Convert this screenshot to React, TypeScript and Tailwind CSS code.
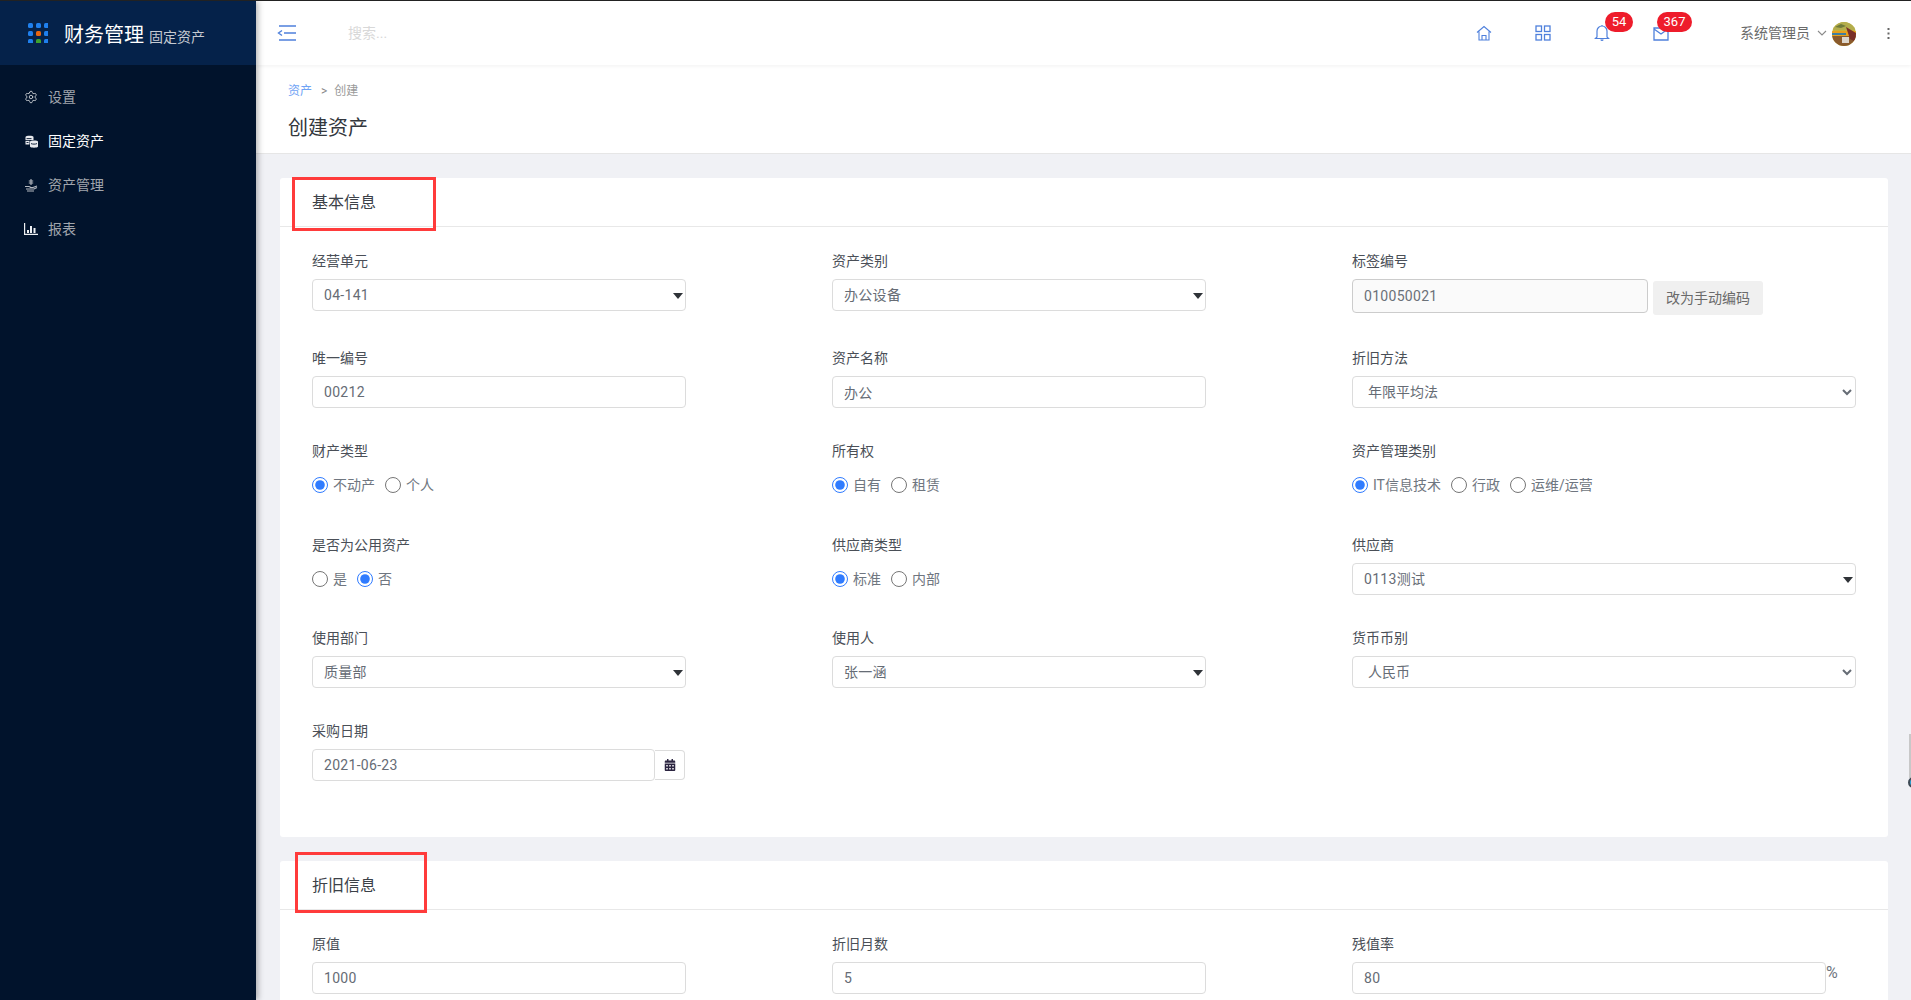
import React from "react";
import { Settings } from "lucide-react";
import { FaCalendarAlt } from "react-icons/fa";

const Label = ({ children }: { children: React.ReactNode }) => (
  <div className="h-[21px] leading-[21px] text-sm text-[#4a4f57]">{children}</div>
);

const Field = ({ label, children }: { label: string; children: React.ReactNode }) => (
  <div>
    <Label>{label}</Label>
    <div className="mt-[7px]">{children}</div>
  </div>
);

const inputCls =
  "block h-8 border border-[#dcdcdc] rounded bg-white px-[11px] text-sm text-[#666c75] tracking-[0.3px] outline-none";

const TextInput = ({ value, className }: { value: string; className: string }) => (
  <input readOnly value={value} className={`${inputCls} ${className}`} />
);

const TriangleSelect = ({ value, className }: { value: string; className: string }) => (
  <div className={`flex h-8 items-center justify-between border border-[#dcdcdc] rounded bg-white pl-[11px] pr-[1px] text-sm text-[#666c75] tracking-[0.3px] ${className}`}>
    <span>{value}</span>
    <svg width="12" height="8" viewBox="0 0 12 8" className="mt-[1px]">
      <path d="M1 1h10L6 7z" fill="#2f3338" />
    </svg>
  </div>
);

const NativeSelect = ({ value }: { value: string }) => (
  <select
    defaultValue={value}
    className="block h-8 w-[504px] rounded border border-[#dcdcdc] bg-white pl-[11px] pr-2 text-sm text-[#666c75] outline-none"
  >
    <option>{value}</option>
  </select>
);

const Radios = ({ name, options, checked }: { name: string; options: string[]; checked: number }) => (
  <div className="mt-[12px] flex h-[22px] items-center gap-[10px]">
    {options.map((o, i) => (
      <label key={o} className="flex items-center gap-[5px] text-sm text-[#6f7680]">
        <input type="radio" name={name} defaultChecked={i === checked} className="m-0 h-4 w-4 accent-[#2f7bff]" />
        <span>{o}</span>
      </label>
    ))}
  </div>
);

const Card = ({ title, children, className }: { title: string; children: React.ReactNode; className?: string }) => (
  <section className={`rounded-[3px] bg-white ${className ?? ""}`}>
    <div className="flex h-[49px] items-center border-b border-[#e8e8e8] pl-8 pt-[2px] text-base text-[#3c4148]">{title}</div>
    {children}
  </section>
);

const NavItem = ({ icon, label, active }: { icon: React.ReactNode; label: string; active?: boolean }) => (
  <div className={`flex h-11 items-center gap-[10px] pl-[24px] text-sm ${active ? "text-white" : "text-[#a0a5ad]"}`}>
    <span className="flex h-4 w-[14px] items-center justify-center">{icon}</span>
    {label}
  </div>
);

const headerIcon = "#4f80dc";

const Badge = ({ n, className }: { n: string; className: string }) => (
  <span className={`absolute top-[-13px] flex h-5 items-center justify-center rounded-full bg-[#ee1c2b] text-[13px] text-white ${className}`}>{n}</span>
);

export default function App() {
  return (
    <div className="relative flex h-screen overflow-hidden border-t border-[#222222] bg-[#f0f1f5] font-[Roboto,'Noto_Sans_CJK_SC',sans-serif]">
      <aside className="relative z-10 w-64 shrink-0 bg-[#01132c] shadow-[2px_0_6px_rgba(0,0,0,0.3)]">
        <div className="flex h-16 items-center bg-[#05224a] pl-7">
          <svg width="20" height="20" viewBox="0 0 20 20">
            {[0, 1, 2].flatMap((r) =>
              [0, 1, 2].map((c) => (
                <rect
                  key={`${r}${c}`}
                  x={c * 8}
                  y={r * 8}
                  width="5"
                  height="5"
                  rx="1.5"
                  fill={r === 1 && c === 1 ? "#e8650f" : r === 2 && c === 1 ? "#3ea32f" : "#1f80ee"}
                />
              ))
            )}
          </svg>
          <span className="ml-4 mt-[3px] text-xl text-white">财务管理</span>
          <span className="ml-[5px] mt-[8px] text-sm text-[#c5cad2]">固定资产</span>
        </div>
        <nav className="pt-[10px]">
          <NavItem label="设置" icon={<Settings size={14} strokeWidth={1.6} color="#c4c8ce" />} />
          <NavItem
            active
            label="固定资产"
            icon={
              <svg width="13" height="13" viewBox="0 0 13 13" fill="#e8eaee">
                <path d="M0.5 2C0.5 .4 8.5 .4 8.5 2V5H0.5z" />
                <path d="M0.5 5.8h4V9.5h-4z" />
                <path d="M5 6.5c0-1.4 8-1.4 8 0v5c0 1.6-8 1.6-8 0z" />
                <path d="M1.5 3.6h5M1.5 7.5h2M6 8.6c1.5.7 4.5.7 6 0" stroke="#01132c" strokeWidth="0.9" fill="none" />
              </svg>
            }
          />
          <NavItem
            label="资产管理"
            icon={
              <svg width="14" height="13" viewBox="0 0 14 13" fill="none" stroke="#b5b9c0" strokeWidth="1.1">
                <path d="M7 0v6M4.8 2h4.4M4.8 4h4.4" />
                <path d="M1 7.5h4c1 0 1 1 2 1h2l4-1.5M2 10h8l3-1.5M3 12h7" />
              </svg>
            }
          />
          <NavItem
            label="报表"
            icon={
              <svg width="14" height="12" viewBox="0 0 14 12" fill="#eef0f3">
                <path d="M0 0h1.2v10.8H14V12H0z" />
                <path d="M3 7h2v3H3zM6 3h2v7H6zM9.5 5h2v5h-2z" />
              </svg>
            }
          />
        </nav>
      </aside>

      <div className="flex min-w-0 flex-1 flex-col">
        <header className="relative z-[5] flex h-16 shrink-0 items-center bg-white shadow-[0_1px_4px_rgba(0,0,0,0.06)]">
          <svg width="20" height="16" viewBox="0 0 20 16" className="ml-[21px]" fill="none" stroke="#4f80dc" strokeWidth="1.4">
            <path d="M2 1h17M7 8h12M2 15h17M5 5.5 1.5 8 5 10.5" />
          </svg>
          <span className="ml-[51px] text-sm text-[#d8d8d8]">搜索...</span>

          <div className="ml-auto flex items-center">
            <svg width="16" height="16" viewBox="0 0 16 16" fill="none" stroke={headerIcon} strokeWidth="1.1" className="mr-[43px]">
              <path d="M1 7.5 8 1.5l7 6M3 6.5V15h10V6.5M6 15v-4.5h4V15" />
            </svg>
            <svg width="16" height="16" viewBox="0 0 16 16" fill="none" stroke={headerIcon} strokeWidth="1.3" className="mr-[43px]">
              <rect x="1" y="1" width="5.5" height="5.5" />
              <rect x="9.5" y="1" width="5.5" height="5.5" />
              <rect x="1" y="9.5" width="5.5" height="5.5" />
              <rect x="9.5" y="9.5" width="5.5" height="5.5" />
            </svg>
            <span className="relative mr-[43px] block h-4 w-4">
              <svg width="16" height="18" viewBox="0 0 16 18" fill="none" stroke={headerIcon} strokeWidth="1.2" className="absolute top-[-1px]">
                <path d="M3 13V7a5 5 0 0 1 10 0v6l1.5 1.5h-13zM8 1v1M6.8 15.5a1.3 1.3 0 0 0 2.4 0" />
              </svg>
              <Badge n="54" className="left-[11px] w-7" />
            </span>
            <span className="relative mr-[71px] block h-4 w-4">
              <svg width="16" height="14" viewBox="0 0 16 14" fill="none" stroke={headerIcon} strokeWidth="1.3" className="absolute top-[2px]">
                <path d="M1 1h14v12H1zM1 2l7 5 7-5" />
              </svg>
              <Badge n="367" className="left-[4px] w-[35px]" />
            </span>
            <span className="text-sm text-[#6a6a6a]">系统管理员</span>
            <svg width="10" height="6" viewBox="0 0 10 6" fill="none" stroke="#8a8a8a" strokeWidth="1.1" className="ml-[7px]">
              <path d="M1 1l4 4 4-4" />
            </svg>
            <svg width="24" height="24" viewBox="0 0 24 24" className="ml-[5px] mt-[1px]">
              <defs>
                <clipPath id="av">
                  <circle cx="12" cy="12" r="12" />
                </clipPath>
              </defs>
              <g clipPath="url(#av)">
                <rect width="24" height="24" fill="#c9b33a" />
                <rect y="0" width="24" height="8" fill="#b3ad4c" />
                <path d="M3 5l6-3 5 2-5 2z" fill="#6f7a3a" />
                <rect y="9" width="24" height="5" fill="#e6a01d" />
                <rect y="11" width="14" height="2" fill="#3f7fa0" />
                <rect y="14" width="24" height="10" fill="#8a5a2c" />
                <path d="M14 5l10 6v9l-6-3z" fill="#7a2f28" />
                <path d="M10 15h7v6h-7z" fill="#ddd6cc" />
              </g>
            </svg>
            <svg width="3" height="11" viewBox="0 0 3 11" fill="#666666" className="ml-[31px] mr-[21px]">
              <rect width="2" height="2" x="0.5" />
              <rect width="2" height="2" x="0.5" y="4.5" />
              <rect width="2" height="2" x="0.5" y="9" />
            </svg>
          </div>
        </header>

        <div className="h-[89px] shrink-0 border-b border-[#e6e6e6] bg-white pl-8">
          <div className="flex items-center pt-[17px] text-xs leading-[18px]">
            <span className="text-[#6fa3f5]">资产</span>
            <span className="ml-[9px] text-[#888888]">&gt;</span>
            <span className="ml-[7px] text-[#9a9a9a]">创建</span>
          </div>
          <h1 className="mt-[14px] text-xl font-normal leading-[28px] text-[#33373d]">创建资产</h1>
        </div>

        <main className="min-h-0 flex-1 pl-6 pr-[23px] pt-6">
          <Card title="基本信息" className="pb-14">
            <div className="grid grid-cols-[374px_374px_504px] grid-rows-[97px_93px_94px_93px_93px_60px] gap-x-[146px] pl-8 pt-6">
              <Field label="经营单元"><TriangleSelect value="04-141" className="w-[374px]" /></Field>
              <Field label="资产类别"><TriangleSelect value="办公设备" className="w-[374px]" /></Field>
              <Field label="标签编号">
                <div className="flex items-start gap-[5px]">
                  <input readOnly value="010050021" className="block h-[34px] w-[296px] rounded border border-[#cccccc] bg-[#fafafa] px-[11px] text-sm tracking-[0.3px] text-[#6b7178] outline-none" />
                  <button className="mt-[2px] h-[34px] w-[110px] rounded-[3px] bg-[#f0f0f0] text-sm text-[#6a6a6a]">改为手动编码</button>
                </div>
              </Field>

              <Field label="唯一编号"><TextInput value="00212" className="w-[374px]" /></Field>
              <Field label="资产名称"><TextInput value="办公" className="w-[374px]" /></Field>
              <Field label="折旧方法"><NativeSelect value="年限平均法" /></Field>

              <div><Label>财产类型</Label><Radios name="a" options={["不动产", "个人"]} checked={0} /></div>
              <div><Label>所有权</Label><Radios name="b" options={["自有", "租赁"]} checked={0} /></div>
              <div><Label>资产管理类别</Label><Radios name="c" options={["IT信息技术", "行政", "运维/运营"]} checked={0} /></div>

              <div><Label>是否为公用资产</Label><Radios name="d" options={["是", "否"]} checked={1} /></div>
              <div><Label>供应商类型</Label><Radios name="e" options={["标准", "内部"]} checked={0} /></div>
              <Field label="供应商"><TriangleSelect value="0113测试" className="w-[504px]" /></Field>

              <Field label="使用部门"><TriangleSelect value="质量部" className="w-[374px]" /></Field>
              <Field label="使用人"><TriangleSelect value="张一涵" className="w-[374px]" /></Field>
              <Field label="货币币别"><NativeSelect value="人民币" /></Field>

              <Field label="采购日期">
                <div className="flex items-center">
                  <input readOnly value="2021-06-23" className={`${inputCls} w-[343px]`} />
                  <span className="flex h-[30px] w-[30px] items-center justify-center rounded-r border border-l-0 border-[#dcdcdc] bg-white">
                    <FaCalendarAlt size={12} color="#2b2440" />
                  </span>
                </div>
              </Field>
            </div>
          </Card>

          <Card title="折旧信息" className="mt-6 h-[300px]">
            <div className="grid grid-cols-[374px_374px_504px] gap-x-[146px] pl-8 pt-6">
              <Field label="原值"><TextInput value="1000" className="w-[374px]" /></Field>
              <Field label="折旧月数"><TextInput value="5" className="w-[374px]" /></Field>
              <Field label="残值率">
                <div className="flex items-start">
                  <TextInput value="80" className="w-[474px]" />
                  <span className="text-base leading-[21px] text-[#6f7680]">%</span>
                </div>
              </Field>
            </div>
          </Card>
        </main>
      </div>

      <div className="absolute left-[292px] top-[176px] z-20 h-[54px] w-[144px] border-[3px] border-[#ff3b3b]" />
      <div className="absolute left-[295px] top-[851px] z-20 h-[61px] w-[132px] border-[3px] border-[#ff3b3b]" />
      <div className="absolute left-[1909px] top-[733px] z-20 h-[44px] w-[2px] bg-[#c8c8c8]" />
      <div className="absolute left-[1908px] top-[776px] z-20 h-[11px] w-[11px] rounded-full border-2 border-[#3d4a55] bg-[#2ba7d8]" />
    </div>
  );
}
